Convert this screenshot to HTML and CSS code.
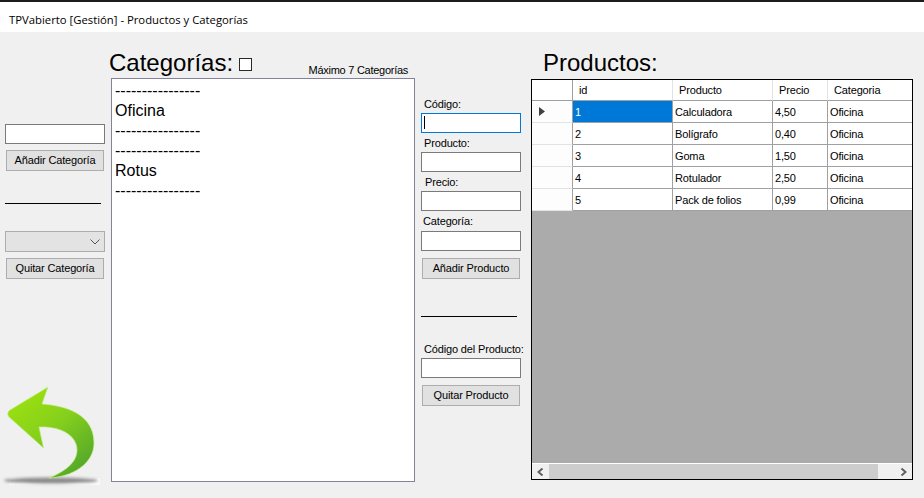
FILE: index.html
```html
<!DOCTYPE html>
<html>
	<head>
		<meta charset="UTF-8">
		<title>TPVabierto [Gestión] - Productos y Categorías</title>
		<link rel="stylesheet" href="styles.css">
	</head>
	<body>
		<!--barra de titulo-->
		<div class="titlebar">TPVabierto [Gestión] - Productos y Categorías</div>

		<div class="main">
			<!--añadir y quitar categorias-->
			<div class="col-left">
				<div class="field field-first"></div>
				<div class="btn btn-add-cat">Añadir Categoría</div>
				<div class="rule rule-left"></div>
				<div class="combo">
					<svg width="10" height="6" viewBox="0 0 10 6"><path d="M0.5 0.5 L5 5 L9.5 0.5" fill="none" stroke="#555" stroke-width="1"/></svg>
				</div>
				<div class="btn btn-del-cat">Quitar Categoría</div>
				<svg class="back-icon" width="105" height="104" viewBox="0 384 105 104">
					<defs>
						<linearGradient id="arrow" x1="0.15" y1="0.1" x2="0.8" y2="0.95">
							<stop offset="0" stop-color="#9ae010"/>
							<stop offset="0.45" stop-color="#86d01c"/>
							<stop offset="1" stop-color="#55a82a"/>
						</linearGradient>
						<filter id="blur" x="-20%" y="-100%" width="140%" height="300%">
							<feGaussianBlur stdDeviation="1.6"/>
						</filter>
					</defs>
					<rect x="9" y="478" width="91" height="7" fill="#fbfbfb"/>
					<ellipse cx="51" cy="480.5" rx="47" ry="3" fill="#8a8a8a" filter="url(#blur)"/>
					<path d="M48 387 L42 404 C68 406 94 415 94 443 C94 464 72 477 49 478 C66 471 77 462 77 450 C77 435 60 426 39 427 L43.5 448 L9 417 Q6 413 10 410 Z" fill="url(#arrow)" stroke="#c4ee8a" stroke-width="0.7"/>
				</svg>
			</div>

			<!--lista de categorias-->
			<div class="col-cat">
				<div class="cat-head">
					<h2 class="heading">Categorías: <span class="tofu"></span></h2>
					<span class="hint">Máximo 7 Categorías</span>
				</div>
				<div class="cat-list">
					<div>----------------</div>
					<div>Oficina</div>
					<div>----------------</div>
					<div>----------------</div>
					<div>Rotus</div>
					<div>----------------</div>
				</div>
			</div>

			<!--formulario de productos-->
			<div class="col-form">
				<div class="label label-first">Código:</div>
				<div class="field field-focus"><span class="caret"></span></div>
				<div class="label">Producto:</div>
				<div class="field"></div>
				<div class="label label-precio">Precio:</div>
				<div class="field"></div>
				<div class="label label-cat">Categoría:</div>
				<div class="field"></div>
				<div class="btn btn-form">Añadir Producto</div>
				<div class="rule rule-form"></div>
				<div class="label label-del">Código del Producto:</div>
				<div class="field"></div>
				<div class="btn btn-form">Quitar Producto</div>
			</div>

			<!--tabla de productos-->
			<div class="col-grid">
				<h2 class="heading heading-prod">Productos:</h2>
				<div class="grid">
					<table>
						<thead>
							<tr>
								<th class="w-head"></th>
								<th class="w-id">id</th>
								<th class="w-prod">Producto</th>
								<th class="w-price">Precio</th>
								<th class="w-cat">Categoria</th>
							</tr>
						</thead>
						<tbody>
							<tr>
								<td class="row-head">
									<svg class="current" width="6" height="9" viewBox="0 0 6 9"><path d="M0 0 L6 4.5 L0 9 Z" fill="#404040"/></svg>
								</td>
								<td class="selected">1</td>
								<td>Calculadora</td>
								<td>4,50</td>
								<td>Oficina</td>
							</tr>
							<tr>
								<td class="row-head"></td>
								<td>2</td>
								<td>Bolígrafo</td>
								<td>0,40</td>
								<td>Oficina</td>
							</tr>
							<tr>
								<td class="row-head"></td>
								<td>3</td>
								<td>Goma</td>
								<td>1,50</td>
								<td>Oficina</td>
							</tr>
							<tr>
								<td class="row-head"></td>
								<td>4</td>
								<td>Rotulador</td>
								<td>2,50</td>
								<td>Oficina</td>
							</tr>
							<tr>
								<td class="row-head"></td>
								<td>5</td>
								<td>Pack de folios</td>
								<td>0,99</td>
								<td>Oficina</td>
							</tr>
						</tbody>
					</table>
					<div class="scrollbar">
						<div class="scroll-btn">
							<svg width="7" height="8" viewBox="0 0 7 8"><path d="M5.5 0.5 L1.5 4 L5.5 7.5" fill="none" stroke="#606060" stroke-width="2"/></svg>
						</div>
						<div class="scroll-thumb"></div>
						<div class="scroll-btn scroll-btn-right">
							<svg width="7" height="8" viewBox="0 0 7 8"><path d="M1.5 0.5 L5.5 4 L1.5 7.5" fill="none" stroke="#606060" stroke-width="2"/></svg>
						</div>
					</div>
				</div>
			</div>
		</div>
	</body>
</html>
```

FILE: styles.css
```css
* {
	padding: 0;
	margin: 0;
	box-sizing: border-box;
}

body {
	width: 924px;
	height: 498px;
	overflow: hidden;
	background-color: #f0f0f0;
	font-family: "Liberation Sans", Arial, sans-serif;
	font-size: 11px;
	letter-spacing: -0.15px;
	color: #000;
}

.titlebar {
	height: 32px;
	padding: 10px 0 0 9px;
	line-height: 15px;
	font-family: "Open Sans", sans-serif;
	font-size: 11.3px;
	letter-spacing: 0;
	background-color: #fff;
	border-top: 2px solid #1c1c1c;
	white-space: nowrap;
}

.main {
	display: flex;
	height: 466px;
	padding-left: 5px;
}

/* columnas */
.col-left {
	width: 100px;
	flex: none;
}

.col-cat {
	width: 304px;
	margin-left: 6px;
	flex: none;
}

.col-form {
	width: 100px;
	margin-left: 6px;
	flex: none;
}

.col-grid {
	width: 382px;
	margin-left: 10px;
	flex: none;
}

/* controles */
.field {
	width: 100px;
	height: 20px;
	background-color: #fff;
	border: 1px solid #7a7a7a;
}

.field-first {
	margin-top: 92px;
}

.field-focus {
	border-color: #0078d7;
	padding: 2px 0 0 2px;
}

.caret {
	display: block;
	width: 1px;
	height: 13px;
	background-color: #000;
}

.btn {
	width: 98px;
	height: 21px;
	margin-left: 1px;
	line-height: 19px;
	text-align: center;
	background-color: #e1e1e1;
	border: 1px solid #adadad;
	white-space: nowrap;
}

.btn-add-cat {
	margin-top: 6px;
}

.btn-del-cat {
	margin-top: 6px;
}

.btn-form {
	margin-top: 7px;
}

.rule {
	width: 96px;
	height: 1px;
	background-color: #000;
}

.rule-left {
	margin-top: 32px;
}

.rule-form {
	margin-top: 37px;
}

.combo {
	display: flex;
	align-items: center;
	justify-content: flex-end;
	width: 100px;
	height: 21px;
	margin-top: 27px;
	padding-right: 4px;
	background-color: #e3e3e3;
	border: 1px solid #adadad;
}

.back-icon {
	display: block;
	margin: 105px 0 0 -5px;
}

/* categorias */
.cat-head {
	display: flex;
	justify-content: space-between;
	height: 46px;
}

.heading {
	height: 46px;
	padding-top: 15px;
	margin-left: -2px;
	font-size: 24px;
	font-weight: normal;
	letter-spacing: 0;
	line-height: 32px;
	white-space: nowrap;
}

.tofu {
	display: inline-block;
	width: 13px;
	height: 13px;
	margin-left: -1px;
	background-color: #fff;
	border: 1px solid #2a2a2a;
}

.hint {
	margin: 32px 7px 0 0;
	line-height: 13px;
	letter-spacing: -0.27px;
}

.cat-list {
	height: 404px;
	padding: 2px 0 0 3px;
	font-size: 16px;
	letter-spacing: 0;
	line-height: 20px;
	background-color: #fff;
	border: 1px solid #82829a;
}

/* formulario */
.label {
	height: 13px;
	margin: 4px 0 2px;
	padding-left: 3px;
	line-height: 13px;
	white-space: nowrap;
}

.label-first {
	margin-top: 66px;
}

.label-precio {
	padding-left: 4px;
}

.label-cat {
	padding-left: 2px;
	margin-bottom: 3px;
}

.label-del {
	margin-top: 26px;
}

/* tabla */
.heading-prod {
	height: 47px;
	margin-left: 12px;
}

.grid {
	display: flex;
	flex-direction: column;
	justify-content: space-between;
	height: 401px;
	background-color: #ababab;
	border: 1px solid #000;
}

table {
	width: 380px;
	table-layout: fixed;
	border-collapse: separate;
	border-spacing: 0;
}

th {
	height: 21px;
	padding-left: 6px;
	font-weight: normal;
	text-align: left;
	background-color: #fff;
	border-right: 1px solid #e3e3e3;
	border-bottom: 1px solid #a0a0a0;
}

td {
	height: 22px;
	padding-left: 2px;
	background-color: #fff;
	border-right: 1px solid #a0a0a0;
	border-bottom: 1px solid #a0a0a0;
}

th:last-child,
td:last-child {
	border-right: none;
}

.w-head {
	width: 41px;
	border-right-color: #a0a0a0;
}

.w-id {
	width: 100px;
}

.w-prod {
	width: 100px;
}

.w-price {
	width: 55px;
}

.w-cat {
	width: 84px;
}

.row-head {
	padding-left: 7px;
	background-color: #fdfdfd;
	border-bottom-color: #e3e3e3;
}

.selected {
	color: #fff;
	background-color: #0078d7;
}

.current {
	display: block;
}

.scrollbar {
	display: flex;
	height: 16px;
	background-color: #f0f0f0;
	border-top: 1px solid #fff;
}

.scroll-btn {
	display: flex;
	align-items: center;
	justify-content: center;
	width: 17px;
	flex: none;
}

.scroll-btn-right {
	width: 34px;
	padding-left: 16px;
}

.scroll-thumb {
	flex: 1;
	background-color: #cdcdcd;
}
```
